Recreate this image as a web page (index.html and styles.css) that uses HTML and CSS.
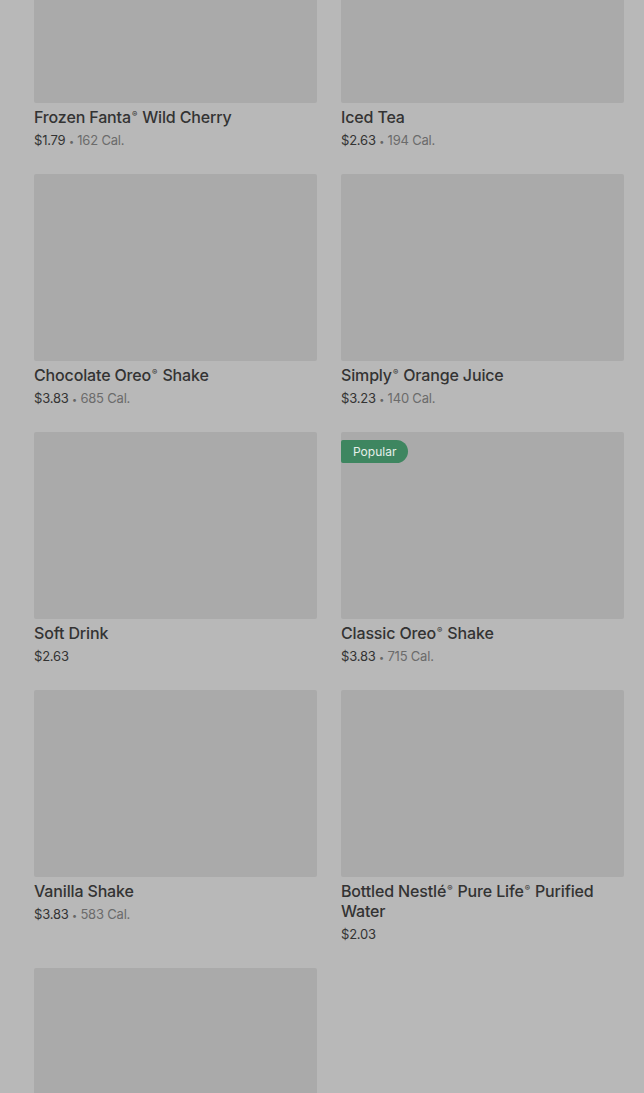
FILE: index.html
```html
<!DOCTYPE html>
<html lang="en">
<head>
    <meta charset="UTF-8">
    <meta name="viewport" content="width=device-width, initial-scale=1.0">
    <title>Menu</title>
    <link rel="stylesheet" href="styles.css">
</head>
<body>
    <div class="menu-grid">
        <div class="item">
            <div class="item-image"></div>
            <div class="item-name">Frozen Fanta<sup>®</sup> Wild Cherry</div>
            <div class="item-meta">$1.79 <span class="dot">•</span> <span class="cal">162 Cal.</span></div>
        </div>
        <div class="item">
            <div class="item-image"></div>
            <div class="item-name">Iced Tea</div>
            <div class="item-meta">$2.63 <span class="dot">•</span> <span class="cal">194 Cal.</span></div>
        </div>
        <div class="item">
            <div class="item-image"></div>
            <div class="item-name">Chocolate Oreo<sup>®</sup> Shake</div>
            <div class="item-meta">$3.83 <span class="dot">•</span> <span class="cal">685 Cal.</span></div>
        </div>
        <div class="item">
            <div class="item-image"></div>
            <div class="item-name">Simply<sup>®</sup> Orange Juice</div>
            <div class="item-meta">$3.23 <span class="dot">•</span> <span class="cal">140 Cal.</span></div>
        </div>
        <div class="item">
            <div class="item-image"></div>
            <div class="item-name">Soft Drink</div>
            <div class="item-meta">$2.63</div>
        </div>
        <div class="item">
            <div class="item-image">
                <span class="badge">Popular</span>
            </div>
            <div class="item-name">Classic Oreo<sup>®</sup> Shake</div>
            <div class="item-meta">$3.83 <span class="dot">•</span> <span class="cal">715 Cal.</span></div>
        </div>
        <div class="item">
            <div class="item-image"></div>
            <div class="item-name">Vanilla Shake</div>
            <div class="item-meta">$3.83 <span class="dot">•</span> <span class="cal">583 Cal.</span></div>
        </div>
        <div class="item">
            <div class="item-image"></div>
            <div class="item-name">Bottled Nestlé<sup>®</sup> Pure Life<sup>®</sup> Purified Water</div>
            <div class="item-meta">$2.03</div>
        </div>
        <div class="item">
            <div class="item-image"></div>
        </div>
    </div>
</body>
</html>
```

FILE: styles.css
```css
body {
    font-family: Inter, "Noto Sans", sans-serif;
    background-color: #b8b8b8;
    margin: 0;
    padding: 0;
    color: #303030;
    overflow: hidden;
}

.menu-grid {
    display: grid;
    grid-template-columns: 283px 283px;
    column-gap: 24px;
    row-gap: 24px;
    padding: 0 20px 0 34px;
    margin-top: -84px;
}

.item-image {
    position: relative;
    height: 187px;
    background-color: #aaaaaa;
    border-radius: 2px;
    margin-bottom: 4px;
}

.item-name {
    font-size: 16px;
    font-weight: 500;
    line-height: 20px;
    color: #333333;
    letter-spacing: -0.15px;
}

.item-name sup {
    font-size: 8px;
    line-height: 8px;
    vertical-align: super;
    margin: 0 1px;
}

.item-meta {
    margin-top: 3px;
    font-size: 13px;
    line-height: 20px;
    height: 20px;
    color: #333333;
    letter-spacing: -0.2px;
}

.dot {
    font-size: 9px;
    line-height: 0;
    color: #666666;
}

.cal {
    color: #6b6b6b;
}

.badge {
    position: absolute;
    top: 8px;
    left: 0;
    background-color: #3e8660;
    color: #e6efe9;
    font-size: 12px;
    line-height: 23px;
    padding: 0 12px;
    border-radius: 2px 12px 12px 2px;
}
```
